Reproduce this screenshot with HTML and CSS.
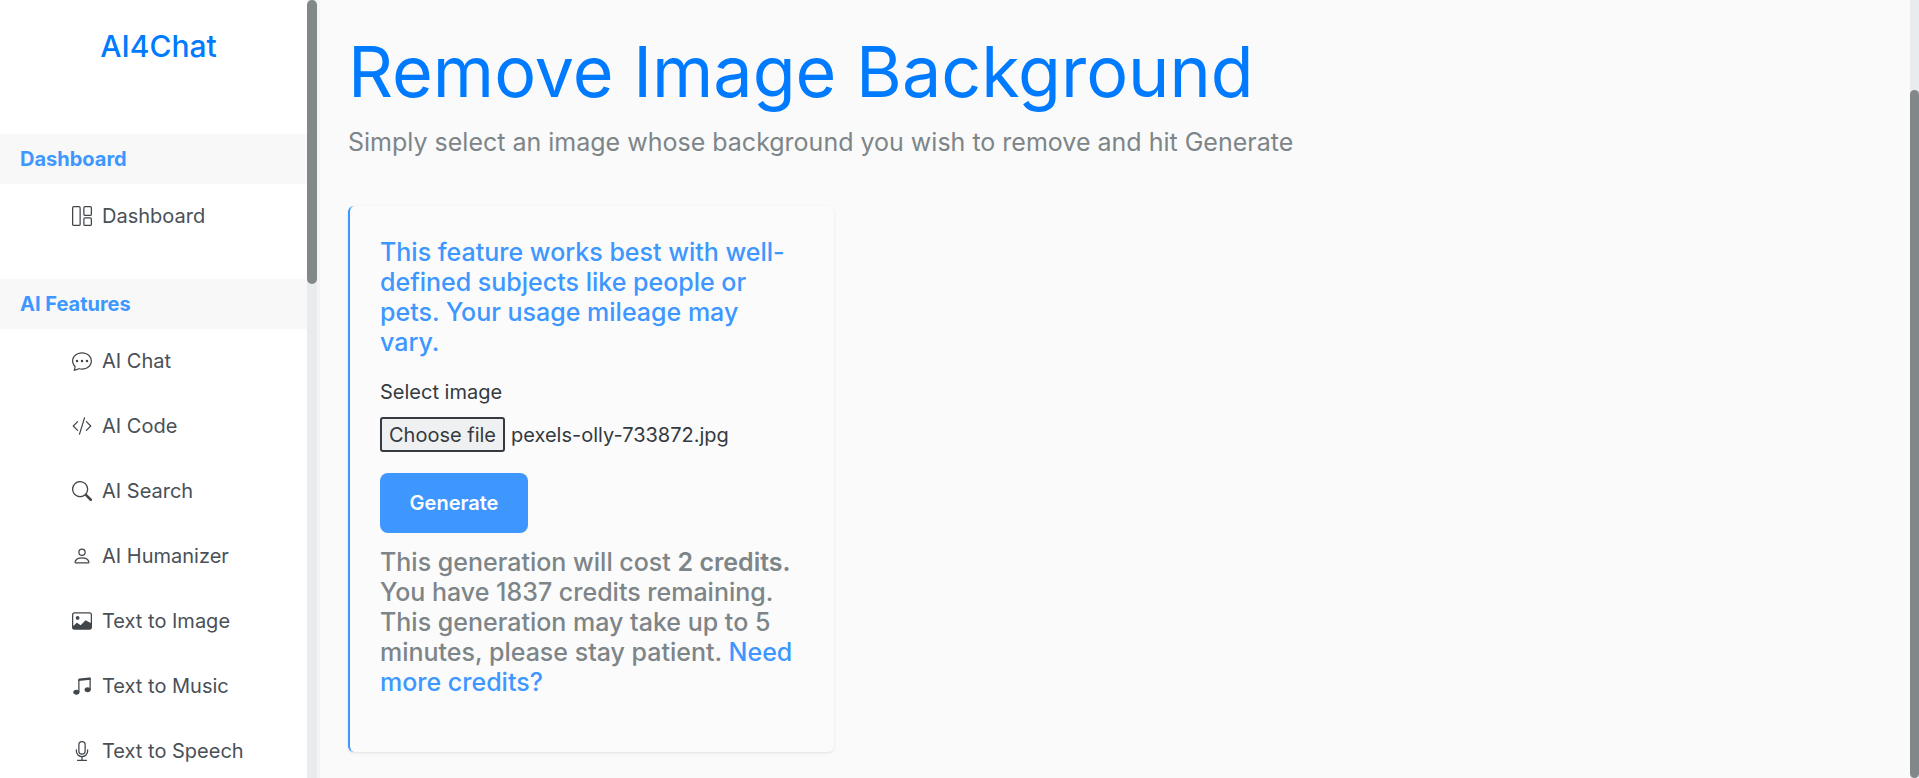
FILE: index.html
```html
<!DOCTYPE html>
<html lang="en">
<head>
<meta charset="utf-8">
<title>Remove Image Background</title>
<link rel="stylesheet" href="styles.css">
</head>
<body>
<div class="app">
  <aside class="sidebar">
    <div class="brand">AI4Chat</div>
    <div class="section-title">Dashboard</div>
    <ul class="nav nav-first">
      <li><svg class="ico" viewBox="0 0 16 16" fill="none" stroke="currentColor" stroke-width="1"><rect x="0.5" y="0.5" width="6" height="15" rx="1"/><rect x="9.5" y="0.5" width="6" height="7" rx="1"/><rect x="9.5" y="9.5" width="6" height="6" rx="1"/></svg><span>Dashboard</span></li>
    </ul>
    <div class="section-title">AI Features</div>
    <ul class="nav">
      <li><svg class="ico" viewBox="0 0 16 16" fill="currentColor"><path d="M5 8a1 1 0 1 1-2 0 1 1 0 0 1 2 0m4 0a1 1 0 1 1-2 0 1 1 0 0 1 2 0m3 1a1 1 0 1 0 0-2 1 1 0 0 0 0 2"/><path d="m2.165 15.803.02-.004c1.83-.363 2.948-.842 3.468-1.105A9 9 0 0 0 8 15c4.418 0 8-3.134 8-7s-3.582-7-8-7-8 3.134-8 7c0 1.76.743 3.37 1.97 4.6a10.4 10.4 0 0 1-.524 2.318l-.003.011a11 11 0 0 1-.244.637c-.079.186.074.394.273.362a22 22 0 0 0 .693-.125m.8-3.108a1 1 0 0 0-.287-.801C1.618 10.83 1 9.468 1 8c0-3.192 3.004-6 7-6s7 2.808 7 6-3.004 6-7 6a8 8 0 0 1-2.088-.272 1 1 0 0 0-.711.074c-.387.196-1.24.57-2.634.893a11 11 0 0 0 .398-2"/></svg><span>AI Chat</span></li>
      <li><svg class="ico" viewBox="0 0 16 16" fill="currentColor"><path d="M10.478 1.647a.5.5 0 1 0-.956-.294l-4 13a.5.5 0 0 0 .956.294zM4.854 4.146a.5.5 0 0 1 0 .708L1.707 8l3.147 3.146a.5.5 0 0 1-.708.708l-3.5-3.5a.5.5 0 0 1 0-.708l3.5-3.5a.5.5 0 0 1 .708 0m6.292 0a.5.5 0 0 0 0 .708L14.293 8l-3.147 3.146a.5.5 0 0 0 .708.708l3.5-3.5a.5.5 0 0 0 0-.708l-3.5-3.5a.5.5 0 0 0-.708 0"/></svg><span>AI Code</span></li>
      <li><svg class="ico" viewBox="0 0 16 16" fill="currentColor"><path d="M11.742 10.344a6.5 6.5 0 1 0-1.397 1.398h-.001q.044.06.098.115l3.85 3.85a1 1 0 0 0 1.415-1.414l-3.85-3.85a1 1 0 0 0-.115-.1zM12 6.5a5.5 5.5 0 1 1-11 0 5.5 5.5 0 0 1 11 0"/></svg><span>AI Search</span></li>
      <li><svg class="ico" viewBox="0 0 16 16" fill="currentColor"><path d="M8 8a3 3 0 1 0 0-6 3 3 0 0 0 0 6m2-3a2 2 0 1 1-4 0 2 2 0 0 1 4 0m4 8c0 1-1 1-1 1H3s-1 0-1-1 1-4 6-4 6 3 6 4m-1-.004c-.001-.246-.154-.986-.832-1.664C11.516 10.68 10.289 10 8 10s-3.516.68-4.168 1.332c-.678.678-.83 1.418-.832 1.664z"/></svg><span>AI Humanizer</span></li>
      <li><svg class="ico" viewBox="0 0 16 16" fill="currentColor"><path d="M6.002 5.5a1.5 1.5 0 1 1-3 0 1.5 1.5 0 0 1 3 0"/><path d="M2.002 1a2 2 0 0 0-2 2v10a2 2 0 0 0 2 2h12a2 2 0 0 0 2-2V3a2 2 0 0 0-2-2zm12 1a1 1 0 0 1 1 1v6.5l-3.777-1.947a.5.5 0 0 0-.577.093l-3.71 3.71-2.66-1.772a.5.5 0 0 0-.63.062L1.002 12V3a1 1 0 0 1 1-1z"/></svg><span>Text to Image</span></li>
      <li><svg class="ico" viewBox="0 0 16 16" fill="currentColor"><path d="M6 13c0 1.105-1.12 2-2.5 2S1 14.105 1 13s1.12-2 2.5-2 2.5.896 2.5 2m9-2c0 1.105-1.12 2-2.5 2s-2.5-.895-2.5-2 1.12-2 2.5-2 2.5.895 2.5 2"/><path fill-rule="evenodd" d="M14 11V2h1v9zM6 3v10H5V3z"/><path d="M5 2.905a1 1 0 0 1 .9-.995l8-.8a1 1 0 0 1 1.1.995V3L5 4z"/></svg><span>Text to Music</span></li>
      <li><svg class="ico" viewBox="0 0 16 16" fill="currentColor"><path d="M3.5 6.5A.5.5 0 0 1 4 7v1a4 4 0 0 0 8 0V7a.5.5 0 0 1 1 0v1a5 5 0 0 1-4.5 4.975V15h3a.5.5 0 0 1 0 1h-7a.5.5 0 0 1 0-1h3v-2.025A5 5 0 0 1 3 8V7a.5.5 0 0 1 .5-.5"/><path d="M10 8a2 2 0 1 1-4 0V3a2 2 0 1 1 4 0zM8 0a3 3 0 0 0-3 3v5a3 3 0 0 0 6 0V3a3 3 0 0 0-3-3"/></svg><span>Text to Speech</span></li>
    </ul>
  </aside>
  <div class="bar bar-side"><div class="thumb thumb-side"></div></div>
  <main class="main">
    <h1 class="title">Remove Image Background</h1>
    <p class="lead">Simply select an image whose background you wish to remove and hit Generate</p>
    <section class="card">
      <p class="note">This feature works best with well-defined subjects like people or pets. Your usage mileage may vary.</p>
      <div class="field-label">Select image</div>
      <div class="file-row"><button class="file-btn" type="button">Choose file</button><span class="file-name">pexels-olly-733872.jpg</span></div>
      <button class="generate" type="button">Generate</button>
      <p class="cost">This generation will cost <b>2 credits.</b> You have 1837 credits remaining. This generation may take up to 5 minutes, please stay patient. <a class="more" href="#">Need more credits?</a></p>
    </section>
  </main>
  <div class="bar bar-page"><div class="thumb thumb-page"></div></div>
</div>
</body>
</html>
```
FILE: styles.css
```css
* { box-sizing: border-box; }
html, body { margin: 0; height: 100%; overflow: hidden; }
body { font-family: Inter, "Liberation Sans", sans-serif; background: #fafafa; color: #343a40; }
.app { display: flex; height: 778px; }

.sidebar { width: 307px; flex: none; background: #fff; overflow: hidden; }
.brand { height: 134px; padding: 26px 0 0 10px; text-align: center; font-size: 30px; font-weight: 500; line-height: 40px; color: #007bff; }
.section-title { height: 50px; padding-left: 20px; background: #f8f8f8; color: #3d97ff; font-size: 20px; font-weight: 700; line-height: 50px; }
.nav { list-style: none; margin: 0; padding: 0; }
.nav-first { padding-bottom: 31px; }
.nav li { height: 65px; padding: 0 0 2px 72px; display: flex; align-items: center; gap: 10px; font-size: 20px; color: #495057; }
.nav-first li { height: 64px; padding-bottom: 0; }
.ico { width: 20px; height: 20px; flex: none; color: #41464b; }

.bar { flex: none; background: #e9ecef; }
.bar-side { width: 13px; border-right: 3px solid #f3f4f5; }
.bar-page { width: 9px; }
.thumb { width: 100%; background: #828789; border-radius: 5px; }
.thumb-side { height: 284px; }
.thumb-page { height: 688px; margin-top: 90px; }

.main { flex: 1; min-width: 0; padding: 0 0 0 28px; }
.title { margin: 29px 0 0; font-size: 70px; line-height: 86px; font-weight: 400; color: #007bff; }
.lead { margin: 9px 0 0; font-size: 25px; line-height: 36px; color: #7d8588; }
.card { margin-top: 46px; width: 486px; height: 546px; padding: 31px 30px 0 30px; background: #fbfbfb; border-left: 2px solid #3d97ff; border-radius: 6px; box-shadow: 0 1px 3px rgba(0,0,0,.1); }
.note { margin: 0; font-size: 25px; line-height: 30px; font-weight: 500; color: #3d97ff; }
.field-label { margin-top: 22px; font-size: 20px; line-height: 27px; color: #343a40; }
.file-row { margin-top: 11px; display: flex; align-items: center; font-size: 20px; color: #343a40; }
.file-btn { height: 35px; width: 125px; padding: 0; font: inherit; color: #343a40; background: #eff0f1; border: 2px solid #343a40; border-radius: 3px; }
.file-name { margin-left: 6px; }
.generate { display: block; margin-top: 21px; width: 148px; height: 60px; padding: 0; border: 0; border-radius: 8px; background: #3d97ff; color: #fff; font: 600 20px Inter, sans-serif; }
.cost { margin: 14px 0 0; font-size: 25px; line-height: 30px; font-weight: 500; color: #7d8588; }
.cost b { font-weight: 600; }
.more { color: #3d97ff; text-decoration: none; }
```
